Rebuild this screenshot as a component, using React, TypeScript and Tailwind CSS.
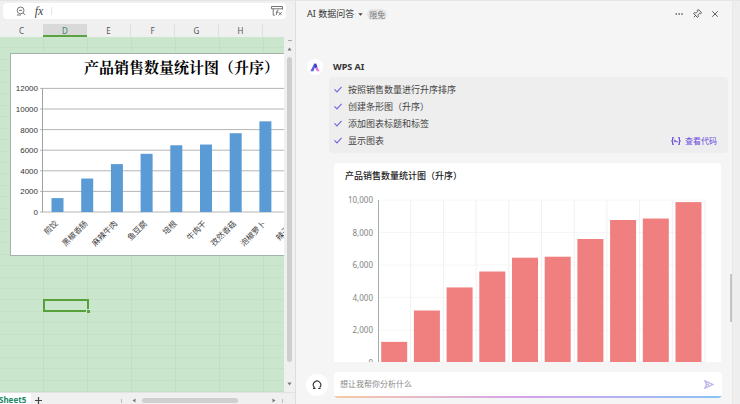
import { MoreHorizontal, Pin, X } from "lucide-react";

const COLUMNS = ["D", "E", "F", "G", "H"];
const ROWS = Array.from({ length: 31 }, (_, i) => i);

const SHEET_BARS = [
  { name: "煎饺", value: 1350 },
  { name: "黑椒香肠", value: 3250 },
  { name: "麻辣牛肉", value: 4650 },
  { name: "鱼豆腐", value: 5650 },
  { name: "培根", value: 6480 },
  { name: "牛肉干", value: 6550 },
  { name: "孜然香菇", value: 7650 },
  { name: "泡椒萝卜", value: 8800 },
  { name: "辣子鸡", value: 8900 },
];

const AI_BARS = [1270, 3200, 4620, 5600, 6450, 6510, 7600, 8770, 8860, 9870];

const STEPS = ["按照销售数量进行升序排序", "创建条形图（升序）", "添加图表标题和标签", "显示图表"];

function SheetChart() {
  const base = 135;
  const step = 20.6;
  return (
    <svg width="320" height="176" viewBox="0 0 320 176" className="block shrink-0">
      {[0, 1, 2, 3, 4, 5, 6].map((n) => {
        const y = base - n * step;
        return (
          <g key={n}>
            <line x1="29" x2="320" y1={y} y2={y} stroke="#b4b4b4" />
            <text
              x="27"
              y={y + 3}
              textAnchor="end"
              fill="#333"
              className="font-['Liberation_Sans',sans-serif] text-[8px]"
            >
              {n * 2000}
            </text>
          </g>
        );
      })}
      <line x1="31.5" x2="31.5" y1={base - 6 * step} y2={base} stroke="#a0a0a0" />
      {SHEET_BARS.map((bar, i) => {
        const x = 40.5 + i * 29.7;
        const h = (bar.value / 2000) * step;
        return (
          <g key={bar.name}>
            <rect x={x} y={base - h} width="12" height={h} fill="#5b9bd5" />
            <text
              transform={`translate(${x + 7} ${base + 12}) rotate(-45)`}
              textAnchor="end"
              fontSize="8"
              fill="#444"
            >
              {bar.name}
            </text>
          </g>
        );
      })}
    </svg>
  );
}

function Spreadsheet() {
  return (
    <section className="flex w-2/5 shrink-0 flex-col overflow-hidden border-r border-[#dedede] bg-[#f0f0f0]">
      {/* Formula bar */}
      <div className="mt-[2px] mr-[9px] ml-[3px] flex h-4 shrink-0 items-center rounded-sm bg-white">
        <button aria-label="查找" className="ml-[10px] flex h-4 w-4 items-center justify-center">
          <svg width="10" height="10" viewBox="0 0 10 10" fill="none" stroke="#666" strokeWidth="0.9">
            <circle cx="4.6" cy="4.4" r="3.4" />
            <path d="M7.1 6.9 9.2 9M3 4.4h3.2M1 9h4" />
          </svg>
        </button>
        <button
          aria-label="插入函数"
          className="ml-[2px] flex h-4 w-4 items-center justify-center font-['Liberation_Serif',serif] text-[12px] leading-4 text-[#444] italic"
        >
          fx
        </button>
        <span className="ml-1 h-2 w-px bg-[#e4e4e4]" />
        <input aria-label="编辑栏" className="h-full min-w-0 flex-1 bg-transparent px-1 text-[9px] outline-none" />
        <button aria-label="函数面板" className="mr-[3px] flex h-4 w-3 items-center justify-center">
          <svg width="12" height="12" viewBox="0 0 12 12" fill="none" stroke="#666" strokeWidth="0.9">
            <path d="M.5 1.5h11M.5 3.8h11M.5 1.5v2.3M11.5 1.5v3M2.2 3.8v6.4h1.6" />
            <path d="M7.5 5.3q-1.3-.4-1.5 1L5.3 10M4.9 7.2h2.3M7.8 7.2l2.8 3M10.8 7.2l-3.2 3" />
          </svg>
        </button>
      </div>

      {/* Column letters */}
      <div className="mt-[5px] flex h-[13px] shrink-0 text-[8px] leading-[13px] text-[#555]">
        <div className="w-[43px] text-center">C</div>
        {COLUMNS.map((col) => (
          <div
            key={col}
            className={
              col === "D"
                ? "w-11 border-b-2 border-[#5da145] bg-[#d9d9d9] text-center text-[#3c8267]"
                : "w-11 border-r border-[#e0e0e0] text-center"
            }
          >
            {col}
          </div>
        ))}
      </div>

      {/* Cells and vertical scroll bar */}
      <div className="flex min-h-0 flex-1">
        <div className="relative flex min-w-0 flex-1 flex-col overflow-hidden bg-[#cae7ce]">
          {ROWS.map((row) => (
            <div key={row} className="flex flex-1 border-b border-[#c4e1c8]">
              <div className="w-11 border-r border-[#c2dfc6]" />
              {COLUMNS.map((col) => (
                <div key={col} className="w-11 border-r border-[#c2dfc6]" />
              ))}
            </div>
          ))}

          {/* Chart object floating over the cells */}
          <div className="absolute top-4 right-0 left-[10px] overflow-hidden border-y border-l border-[#a3b3a8] bg-white pb-[2px]">
            <h2 className="pt-[3px] pl-[73px] font-['Noto_Serif_CJK_SC','Liberation_Serif','Noto_Sans_CJK_SC',serif] text-[15px] leading-5 font-bold whitespace-nowrap text-black">
              产品销售数量统计图（升序）
            </h2>
            <SheetChart />
          </div>

          {/* Selected cell */}
          <div className="absolute top-[262px] left-[43px] h-[13px] w-[46px] border-2 border-[#58a03c]">
            <span className="absolute -right-[3px] -bottom-[3px] h-1 w-1 border-t border-l border-[#c9e7cd] bg-[#58a03c]" />
          </div>
        </div>
        <div className="flex w-[11px] flex-col items-center pt-[3px] pb-[6px] text-[#777]">
          <span className="h-px w-1 bg-[#aaa]" />
          <svg width="5" height="4" viewBox="0 0 5 4" className="mt-[6px]">
            <path d="M.5 3.5h4L2.5.5z" fill="currentColor" />
          </svg>
          <span className="mt-[6px] mb-5 w-[5px] flex-1 rounded-full bg-[#cecece]" />
          <svg width="5" height="4" viewBox="0 0 5 4">
            <path d="M.5.5h4l-2 3z" fill="currentColor" />
          </svg>
        </div>
      </div>

      {/* Sheet tabs */}
      <div className="flex h-3 shrink-0 items-center overflow-hidden border-t border-[#e2e2e2]">
        <button className="-ml-px h-3 w-8 bg-white pt-px text-left text-[8px] leading-3 font-bold text-[#1d8a67]">
          Sheet5
        </button>
        <button aria-label="新建工作表" className="ml-1 pt-1">
          <svg width="7" height="7" viewBox="0 0 7 7" stroke="#444" strokeWidth="1.2">
            <path d="M3.5 0v7M0 3.5h7" />
          </svg>
        </button>
        <div className="ml-auto flex items-center gap-1 pt-1 pr-3 text-[#777]">
          <span className="h-1 w-px bg-[#bbb]" />
          <svg width="8" height="5" viewBox="0 0 8 5" className="ml-1">
            <path d="M5.5.5v4l-3-2z" fill="currentColor" />
          </svg>
          <span className="mr-7 h-[5px] w-24 rounded-full bg-[#cfcfcf]" />
          <svg width="8" height="5" viewBox="0 0 8 5">
            <path d="M2.5.5v4l3-2z" fill="currentColor" />
          </svg>
          <span className="h-1 w-px bg-[#bbb]" />
        </div>
      </div>
    </section>
  );
}

function AiChart() {
  const base = 179.5;
  const step = 32.5;
  return (
    <svg width="388" height="186" viewBox="0 0 388 186" className="block shrink-0">
      {[0, 1, 2, 3, 4, 5].map((n) => (
        <g key={n}>
          <line x1="45" x2="371" y1={base - n * step} y2={base - n * step} stroke="#f6f6f6" />
          <text x="39" y={base - n * step + 3} textAnchor="end" fontSize="8" fill="#7d8580">
            {(n * 2000).toLocaleString("en-US")}
          </text>
        </g>
      ))}
      {AI_BARS.map((value, i) => {
        const x = 47.2 + i * 32.7;
        const h = (value / 2000) * step;
        return (
          <g key={value}>
            <line x1={x + 29.5} x2={x + 29.5} y1={base - 5 * step} y2={base} stroke="#f1f1f1" />
            <rect x={x} y={base - h} width="26" height={h} fill="#f08080" />
          </g>
        );
      })}
      <line x1="44.5" x2="44.5" y1={base - 5 * step} y2={base} stroke="#a3abad" />
    </svg>
  );
}

function AiPanel() {
  return (
    <section className="relative flex min-w-0 flex-1 flex-col border-r border-[#e8e8e8] bg-[#f5f5f5]">
      <header className="flex h-[26px] shrink-0 items-center pr-3 pl-[11px] text-[#333]">
        <button className="flex items-center gap-1 text-[9px] leading-3">
          AI 数据问答
          <svg width="5" height="3" viewBox="0 0 5 3">
            <path d="M.3.3h4.4L2.5 2.8z" fill="#444" />
          </svg>
        </button>
        <span className="ml-1 rounded-full bg-[#e5e5e5] px-[2px] text-[8px] leading-[11px] text-[#777]">限免</span>
        <div className="ml-auto flex items-center gap-2 text-[#444]">
          <button aria-label="更多">
            <MoreHorizontal size={10} strokeWidth={1.5} />
          </button>
          <button aria-label="固定">
            <Pin size={10} className="rotate-45" />
          </button>
          <button aria-label="关闭">
            <X size={10} />
          </button>
        </div>
      </header>

      {/* Reply */}
      <div className="flex min-h-0 flex-1 flex-col pt-8 pr-1 pb-[10px] pl-[11px]">
        <div className="flex shrink-0 items-center gap-[10px]">
          <span className="flex h-4 w-4 items-center justify-center rounded-full bg-white">
            <svg width="10" height="9" viewBox="0 0 10 9">
              <path d="M4.1.8h2.2L3.4 8.2H.4z" fill="#5560ea" />
              <path d="M4.1.8h2.2l1.2 3.4-2.3 1z" fill="#3a3fc4" />
              <path d="M5.2 5.5 7.3 3.9l2.3 4.3H6.9z" fill="#e87ad8" />
            </svg>
          </span>
          <h1 className="text-[9px] leading-4 font-bold text-[#333]">WPS AI</h1>
        </div>

        <div className="mt-[2px] ml-[22px] flex shrink-0 items-end justify-between rounded bg-[#eeeeee] py-1 pr-[11px] pl-[5px]">
          <ul className="text-[9px] leading-[17px] text-[#444]">
            {STEPS.map((step) => (
              <li key={step} className="flex items-center gap-[6px]">
                <svg width="8" height="7" viewBox="0 0 8 7" fill="none" stroke="#7468e0" strokeWidth="1.2">
                  <path d="M.5 3.4 3 5.9 7.6.9" />
                </svg>
                {step}
              </li>
            ))}
          </ul>
          <button className="flex items-center gap-1 text-[8px] leading-[17px] text-[#6a4be0]">
            <svg width="10" height="8" viewBox="0 0 10 8" fill="none" stroke="currentColor" strokeWidth="1.1">
              <path d="M3 .7H1.6v2.5L.8 4l.8.8v2.5H3M7 .7h1.4v2.5l.8.8-.8.8v2.5H7M3.3 2.8 4.5 4 3.3 5.2M5.2 4.6h1.5" />
            </svg>
            查看代码
          </button>
        </div>

        <div className="mt-[10px] mr-[7px] ml-[27px] min-h-0 flex-1 overflow-hidden rounded-t bg-white">
          <h2 className="pt-[5px] pl-[11px] text-[9px] leading-[15px] font-medium text-[#222]">
            产品销售数量统计图（升序）
          </h2>
          <AiChart />
        </div>
      </div>

      {/* Prompt */}
      <div className="mb-[6px] flex shrink-0 items-center gap-[6px] pr-[10px] pl-[10px]">
        <button aria-label="新对话" className="flex h-[22px] w-[22px] items-center justify-center rounded-full bg-white">
          <svg width="10" height="10" viewBox="0 0 10 10" fill="none" stroke="#333" strokeWidth="1.1">
            <path d="M3.6 8.4H1.6l.5-1.3A3.7 3.7 0 1 1 7.6 7.5M6.2 8.5h2.3" />
          </svg>
        </button>
        <div className="min-w-0 flex-1 overflow-hidden rounded-sm bg-white">
          <div className="flex h-6 items-center pr-2 pl-[6px]">
            <input
              aria-label="提问"
              placeholder="想让我帮你分析什么"
              className="min-w-0 flex-1 bg-transparent text-[8px] leading-4 outline-none placeholder:text-[#888]"
            />
            <button aria-label="发送">
              <svg width="10" height="9" viewBox="0 0 10 9" fill="none" stroke="#c3b8ee" strokeWidth="1.5">
                <path d="M1 .9 9 4.5 1 8.1l1.5-3.6zM2.5 4.5H5" />
              </svg>
            </button>
          </div>
          <div className="h-[2px] bg-linear-to-r from-[#f7c9a4] via-[#d3a3ec] to-[#86c2f5]" />
        </div>
      </div>

      {/* Scroll thumb over the right edge */}
      <span className="absolute top-[273px] right-0 h-12 w-[2px] bg-[#c4c4c4]" />
    </section>
  );
}

export default function App() {
  return (
    <main className="flex h-screen overflow-hidden border-t border-[#e6e6e6] bg-[#eeeeee] font-['Noto_Sans','Noto_Sans_CJK_SC',sans-serif]">
      <Spreadsheet />
      <AiPanel />
      <div className="w-[7px] shrink-0" />
    </main>
  );
}
